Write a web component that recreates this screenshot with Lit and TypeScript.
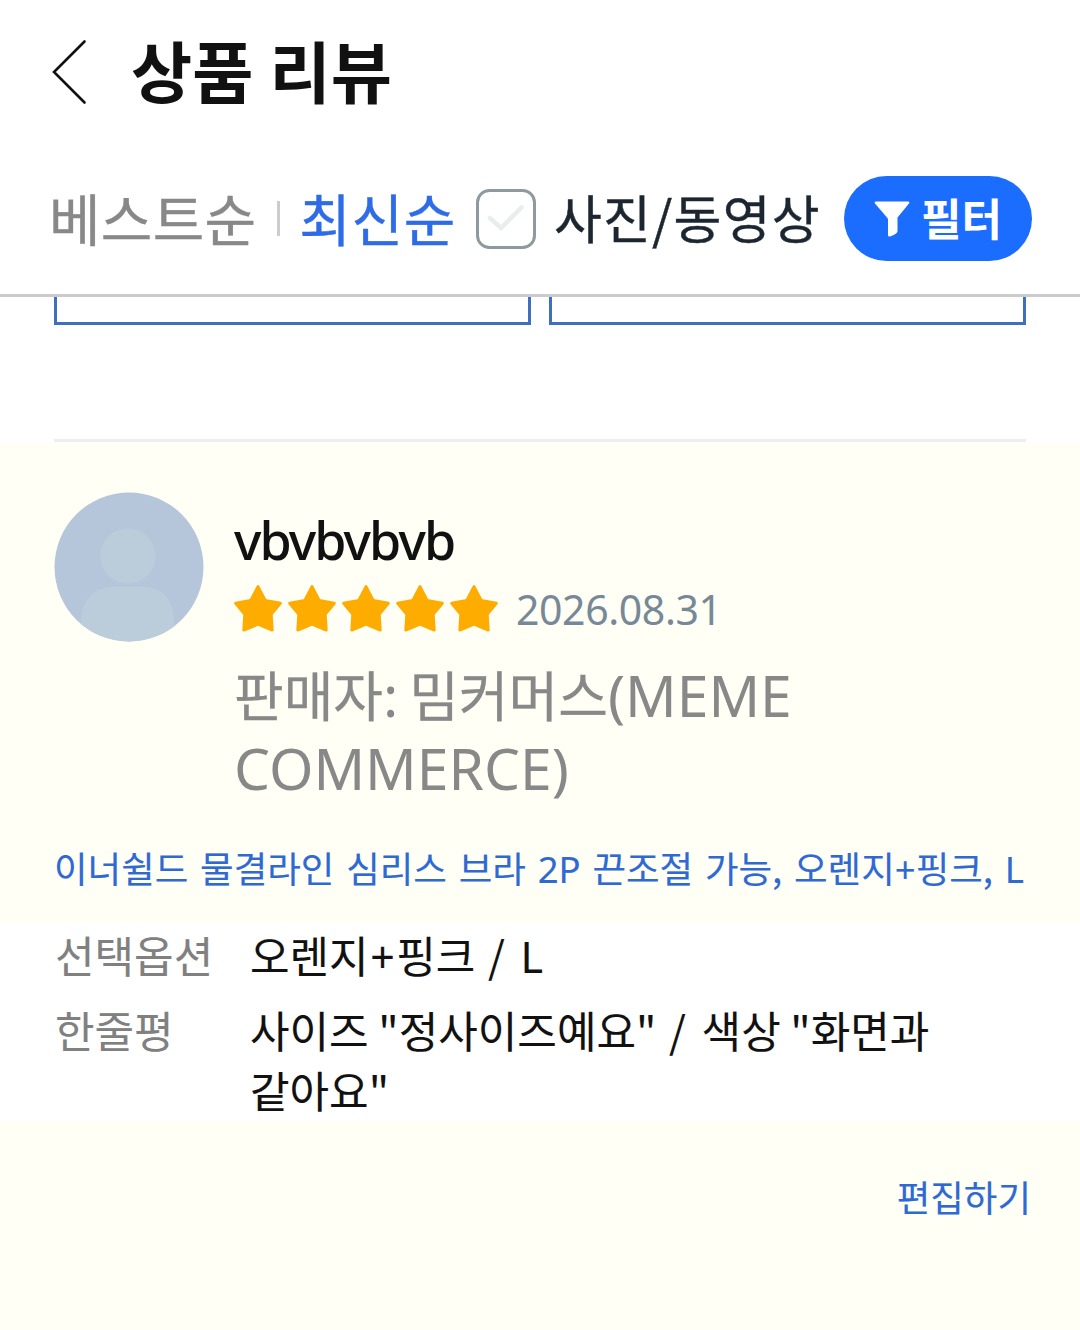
import { LitElement, html, css } from "lit";
import { customElement } from "lit/decorators.js";

@customElement("review-stars")
class ReviewStars extends LitElement {
  static styles = css`
    :host { display: flex; gap: 4px; }
    .star { width: 50px; height: 50px; display: block; }
  `;
  render() {
    return [1, 2, 3, 4, 5].map(
      () => html`<svg class="star" viewBox="0 0 50 50">
        <path d="M25 3.6L32.2 17.4L47.3 20.2L38.2 31.4L39.2 47L25 41.2L10.8 47L11.8 31.4L2.7 20.2L17.8 17.4Z"
          fill="#ffac00" stroke="#ffac00" stroke-width="3" stroke-linejoin="round" />
      </svg>`
    );
  }
}

@customElement("app-root")
class AppRoot extends LitElement {
  static styles = css`
    :host {
      display: block;
      width: 1080px;
      height: 1330px;
      overflow: hidden;
      background: #fff;
      color: #111;
      font-family: "Noto Sans CJK KR", "Noto Sans", sans-serif;
      white-space: nowrap;
    }
    .latin { font-family: "Noto Sans", "Noto Sans CJK KR", sans-serif; }
    .bar { display: flex; align-items: center; height: 146px; padding: 0 0 2px 50px; box-sizing: border-box; }
    .back { width: 38px; height: 66px; display: block; }
    .title { margin: 0 0 0 43px; padding-bottom: 6px; font-size: 66.5px; line-height: 90px; font-weight: 700; word-spacing: 1px; }
    .sorts { display: flex; align-items: center; height: 151px; padding: 0 48px 3px 49px; box-sizing: border-box; border-bottom: 3px solid #cbcbcb; }
    .sort { padding-bottom: 4px; font-size: 56px; line-height: 80px; letter-spacing: 0.3px; color: #888; -webkit-text-stroke: 0.4px currentColor; }
    .sort.on { letter-spacing: 0.7px; color: #2e6be6; }
    .split { width: 3px; height: 35px; margin: 0 19px 0 21px; background: #ccc; }
    .check { width: 60px; height: 60px; margin-left: 20px; display: block; }
    .media { padding-bottom: 3px; margin-left: 18px; font-size: 52px; line-height: 76px; letter-spacing: 1.2px; color: #1c2630; -webkit-text-stroke: 0.4px currentColor; }
    .filter { display: flex; align-items: center; width: 188px; height: 85px; margin-left: auto; padding-left: 30px; box-sizing: border-box; border-radius: 43px; background: #1b6dff; color: #fff; font-size: 44px; line-height: 64px; font-weight: 700; }
    .filter-text { padding-bottom: 4px; }
    .funnel { width: 36px; height: 36px; margin-right: 11px; display: block; }
    .boxes { display: grid; grid-template-columns: 477px 477px; gap: 18px; padding-left: 54px; height: 142px; }
    .box { height: 28px; box-sizing: border-box; border: 3px solid #3e70bd; border-top: 0; }
    .rule { height: 3px; margin: 0 54px; background: #eee; }
    .review { height: 888px; background: #fffff5; }
    .author { display: flex; padding: 50px 54px 0 54px; height: 395px; box-sizing: border-box; }
    .avatar { width: 150px; height: 150px; display: block; flex: none; }
    .who { margin-left: 30px; }
    .name { font-size: 52px; line-height: 70px; margin-top: 13px; font-weight: 500; letter-spacing: -1.9px; }
    .rating { display: flex; align-items: center; height: 66px; margin-left: -1px; }
    .date { margin: 2px 0 0 17px; font-size: 41px; line-height: 56px; letter-spacing: -0.4px; color: #778896; }
    .seller { margin-top: 17px; font-size: 54px; line-height: 72px; color: #888; -webkit-text-stroke: 0.3px currentColor; }
    .seller .latin { font-size: 57px; -webkit-text-stroke: 0; }
    .seller .colon { letter-spacing: -2px; }
    .product { height: 86px; box-sizing: border-box; padding: 4px 0 0 54px; font-size: 36.5px; line-height: 54px; word-spacing: 3.6px; color: #2f69d3; -webkit-text-stroke: 0.15px currentColor; }
    .facts { display: grid; grid-template-columns: 195px 1fr; align-content: start; row-gap: 11px; height: 198px; padding: 1px 54px 0 55px; box-sizing: border-box; background: #fff; font-size: 43px; line-height: 60.5px; -webkit-text-stroke: 0.1px currentColor; }
    .facts .plus { margin: 0 1.5px; }
    .facts .slash { margin: 0 6px 0 3px; }
    .label { color: #808080; }
    .edit { text-align: right; padding: 49px 49px 0 0; font-size: 36.5px; line-height: 54px; color: #2f69d3; -webkit-text-stroke: 0.15px currentColor; }
  `;

  render() {
    return html`
      <header class="bar">
        <svg class="back" viewBox="0 0 38 66"><path d="M34.5 2.5L4 33L34.5 63.5" fill="none" stroke="#111" stroke-width="2.6" stroke-linecap="round" /></svg>
        <h1 class="title">상품 리뷰</h1>
      </header>
      <nav class="sorts">
        <span class="sort">베스트순</span>
        <span class="split"></span>
        <span class="sort on">최신순</span>
        <svg class="check" viewBox="0 0 60 60">
          <rect x="1.5" y="1.5" width="57" height="57" rx="12" fill="#fff" stroke="#8d9ba1" stroke-width="3" />
          <path d="M14 29L25 39L45.5 18.500" fill="none" stroke="#e9eded" stroke-width="4.5" stroke-linecap="round" />
        </svg>
        <span class="media">사진/동영상</span>
        <div class="filter">
          <svg class="funnel" viewBox="0 0 36 36"><path d="M2 .5H34Q36 .5 35 2.5L23.5 16.5V30.5Q23 33 16 35.5Q14 36 14 34V18L13 16.5L1 2.5Q0 .5 2 .5Z" fill="#fff" /></svg>
          <span class="filter-text">필터</span>
        </div>
      </nav>
      <div class="boxes"><div class="box"></div><div class="box"></div></div>
      <div class="rule"></div>
      <article class="review">
        <section class="author">
          <svg class="avatar" viewBox="0 0 150 150">
            <clipPath id="disc"><circle cx="75" cy="75" r="74.5" /></clipPath>
            <g clip-path="url(#disc)">
              <rect width="150" height="150" fill="#b5c6da" />
              <circle cx="74" cy="64" r="27.5" fill="#bbccda" />
              <path d="M27 130V126Q31 96 58 95H90Q117 96 120 126V150H27Z" fill="#bbccda" />
            </g>
          </svg>
          <div class="who">
            <div class="name latin">vbvbvbvb</div>
            <div class="rating"><review-stars></review-stars><span class="date latin">2026.08.31</span></div>
            <div class="seller">판매자<span class="latin colon">: </span>밈커머스<span class="latin">(MEME<br />COMMERCE)</span></div>
          </div>
        </section>
        <div class="product">이너쉴드 물결라인 심리스 브라 <span class="latin">2P</span> 끈조절 가능, 오렌지<span class="latin">+</span>핑크, <span class="latin">L</span></div>
        <section class="facts">
          <span class="label">선택옵션</span><span>오렌지<span class="latin plus">+</span>핑크 <span class="slash">/</span> <span class="latin">L</span></span>
          <span class="label">한줄평</span><span>사이즈 "정사이즈예요" <span class="slash">/</span> 색상 "화면과<br />같아요"</span>
        </section>
        <div class="edit">편집하기</div>
      </article>
    `;
  }
}
